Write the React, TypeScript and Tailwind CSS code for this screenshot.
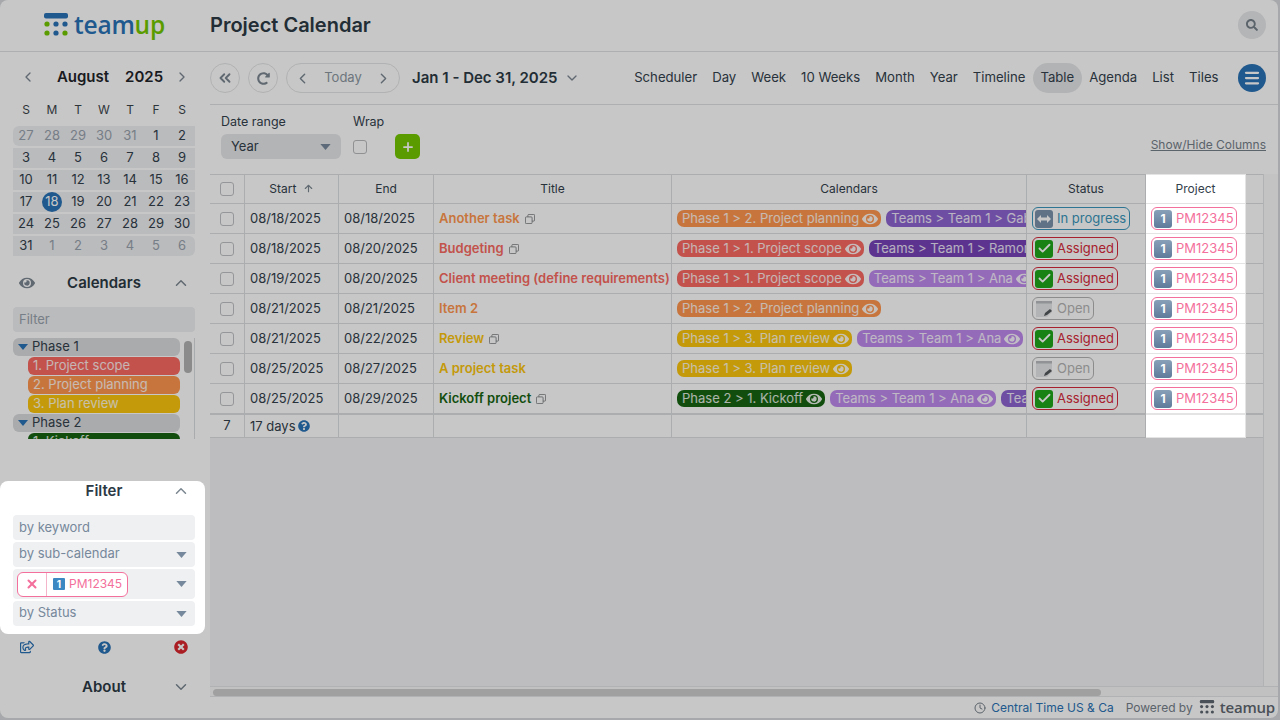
import { ArrowUp, Check, ChevronDown, ChevronLeft, ChevronRight, ChevronsLeft, ChevronUp, Clock, Menu, Plus, X } from "lucide-react";
import { FaEye, FaQuestionCircle, FaRedoAlt, FaRegShareSquare, FaSearch, FaTimesCircle } from "react-icons/fa";

// The whole page sits under a dim layer (z-10). Filter panel and Project column are lifted over it (z-20).

const ORANGE = "bg-[#ff974f]";
const RED = "bg-[#f96961]";
const YELLOW = "bg-[#fbc50d]";
const GREEN = "bg-[#176512]";
const PURPLE = "bg-[#8e65d1]";
const DARK_PURPLE = "bg-[#7643b9]";
const LIGHT_PURPLE = "bg-[#be8aec]";

type Tag = { label: string; color: string };
type Status = "progress" | "assigned" | "open";
type Row = {
  start: string;
  end: string;
  title: string;
  titleColor: string;
  copy: boolean;
  tags: Tag[];
  status: Status;
};

const PLANNING = { label: "Phase 1 > 2. Project planning", color: ORANGE };
const SCOPE = { label: "Phase 1 > 1. Project scope", color: RED };
const REVIEW = { label: "Phase 1 > 3. Plan review", color: YELLOW };
const ANA = { label: "Teams > Team 1 > Ana", color: LIGHT_PURPLE };

const rows: Row[] = [
  { start: "08/18/2025", end: "08/18/2025", title: "Another task", titleColor: "text-[#ff974f]", copy: true, tags: [PLANNING, { label: "Teams > Team 1 > Gabriel", color: PURPLE }], status: "progress" },
  { start: "08/18/2025", end: "08/20/2025", title: "Budgeting", titleColor: "text-[#f96961]", copy: true, tags: [SCOPE, { label: "Teams > Team 1 > Ramon", color: DARK_PURPLE }], status: "assigned" },
  { start: "08/19/2025", end: "08/20/2025", title: "Client meeting (define requirements)", titleColor: "text-[#f96961]", copy: false, tags: [SCOPE, ANA], status: "assigned" },
  { start: "08/21/2025", end: "08/21/2025", title: "Item 2", titleColor: "text-[#ff974f]", copy: false, tags: [PLANNING], status: "open" },
  { start: "08/21/2025", end: "08/22/2025", title: "Review", titleColor: "text-[#fbc50d]", copy: true, tags: [REVIEW, ANA], status: "assigned" },
  { start: "08/25/2025", end: "08/27/2025", title: "A project task", titleColor: "text-[#fbc50d]", copy: false, tags: [REVIEW], status: "open" },
  { start: "08/25/2025", end: "08/29/2025", title: "Kickoff project", titleColor: "text-[#176512]", copy: true, tags: [{ label: "Phase 2 > 1. Kickoff", color: GREEN }, ANA, { label: "Teams > Team 1", color: PURPLE }], status: "assigned" },
];

const weeks = [
  [27, 28, 29, 30, 31, 1, 2],
  [3, 4, 5, 6, 7, 8, 9],
  [10, 11, 12, 13, 14, 15, 16],
  [17, 18, 19, 20, 21, 22, 23],
  [24, 25, 26, 27, 28, 29, 30],
  [31, 1, 2, 3, 4, 5, 6],
];

const views = ["Scheduler", "Day", "Week", "10 Weeks", "Month", "Year", "Timeline", "Table", "Agenda", "List", "Tiles"];

function Caret({ className }: { className: string }) {
  return (
    <svg viewBox="0 0 12 7" className={className} aria-hidden="true">
      <path d="M0 0h12L6 7z" fill="currentColor" />
    </svg>
  );
}

function Logo({ blue, green, textSize, iconSize, gap }: { blue: string; green: string; textSize: string; iconSize: string; gap: string }) {
  return (
    <div className={`flex items-center ${gap}`}>
      <svg viewBox="0 0 24 25" className={iconSize} aria-hidden="true">
        <rect x="0" y="0" width="24" height="5.5" rx="2" className={blue} fill="currentColor" />
        <circle cx="3" cy="11" r="2.6" className={green} fill="currentColor" />
        <circle cx="12" cy="11" r="2.6" className={blue} fill="currentColor" />
        <circle cx="21" cy="11" r="2.6" className={blue} fill="currentColor" />
        <circle cx="3" cy="20" r="2.6" className={green} fill="currentColor" />
        <circle cx="12" cy="20" r="2.6" className={blue} fill="currentColor" />
        <circle cx="21" cy="20" r="2.6" className={green} fill="currentColor" />
      </svg>
      <span className={`font-['Open_Sans',sans-serif] font-semibold leading-none tracking-[-0.2px] ${textSize}`}>
        <span className={blue}>team</span>
        <span className={green}>up</span>
      </span>
    </div>
  );
}

function MiniCalendar() {
  return (
    <div className="pl-[13px] pr-[15px]">
      <div className="mt-[13px] flex h-6 items-center justify-between pl-[7px] pr-[5px] text-[#7c8791]">
        <ChevronLeft size={16} />
        <div className="ml-[10px] flex gap-4 text-[15px] font-semibold text-[#1f2429]">
          <span>August</span>
          <span>2025</span>
        </div>
        <ChevronRight size={16} />
      </div>
      <div className="mt-[11px] grid h-5 grid-cols-7 items-center text-center text-[12px] text-[#3c444b]">
        {["S", "M", "T", "W", "T", "F", "S"].map((d, i) => (
          <span key={i}>{d}</span>
        ))}
      </div>
      <div className="mt-[6px] flex flex-col gap-[2px]">
        {weeks.map((week, w) => (
          <div
            key={w}
            className={`grid h-5 grid-cols-7 items-center bg-[#eff0f2] text-center text-[13px] ${w === 0 ? "rounded-l-[6px]" : ""} ${w === 5 ? "rounded-r-[6px]" : ""}`}
          >
            {week.map((d, i) => {
              const other = (w === 0 && d > 20) || (w === 5 && d < 20);
              if (w === 3 && d === 18) {
                return (
                  <span key={i} className="mx-auto flex size-5 items-center justify-center rounded-full bg-[#2a72b5] text-white">
                    {d}
                  </span>
                );
              }
              return (
                <span key={i} className={other ? "text-[#98a2ad]" : "text-[#33414c]"}>
                  {d}
                </span>
              );
            })}
          </div>
        ))}
      </div>
    </div>
  );
}

function CalendarList() {
  const Group = ({ label }: { label: string }) => (
    <div className="flex h-[18px] items-center gap-[4px] rounded-[6px] bg-[#dadbdd] pl-[5px] text-[13px] text-[#33414c]">
      <Caret className="h-[6px] w-[10px] text-[#2a72b5]" />
      {label}
    </div>
  );
  const Item = ({ label, color }: { label: string; color: string }) => (
    <div className={`ml-[15px] flex h-[18px] shrink-0 items-center overflow-hidden rounded-[6px] pl-[5px] text-[13px] text-white/85 ${color}`}>{label}</div>
  );
  return (
    <div className="relative mt-[6px] h-[101px] overflow-hidden border-r border-[#dadbdd] pr-[14px]">
      <div className="flex flex-col gap-px">
        <Group label="Phase 1" />
        <Item label="1. Project scope" color={RED} />
        <Item label="2. Project planning" color={ORANGE} />
        <Item label="3. Plan review" color={YELLOW} />
        <Group label="Phase 2" />
        <Item label="1. Kickoff" color={GREEN} />
      </div>
      <div className="absolute right-[2px] top-[3px] h-8 w-2 rounded-full bg-[#b3b3b3]" />
    </div>
  );
}

function FilterPanel() {
  const fieldText = "text-[13px] text-[#76889b]";
  return (
    <div className="relative z-20 mt-[42px] h-[153px] w-[205px] rounded-lg bg-white pl-[13px] pr-[10px]">
      <div className="relative flex h-5 items-center justify-center text-[15px] font-semibold text-[#2c3a45]">
        <span>Filter</span>
        <ChevronUp size={18} className="absolute right-[5px] text-[#7c8791]" />
      </div>
      <div className="mt-[14px] flex flex-col gap-[2px]">
        <div className={`flex h-[25px] items-center rounded-[4px] bg-[#eff0f2] pl-[6px] ${fieldText}`}>by keyword</div>
        <div className={`flex h-[25px] items-center justify-between rounded-[4px] bg-[#eff0f2] pl-[6px] pr-[8px] ${fieldText}`}>
          <span className="-mt-[2px]">by sub-calendar</span>
          <Caret className="h-[6px] w-[11px] text-[#76889b]" />
        </div>
        <div className="flex h-[30px] items-center justify-between rounded-[4px] bg-[#eff0f2] pl-1 pr-[8px]">
          <div className="flex h-[25px] w-[111px] items-center rounded-[6px] border border-[#f4709c] bg-white">
            <div className="flex h-full w-[29px] items-center justify-center border-r border-[#f4b4c9]">
              <X size={14} strokeWidth={3.5} className="text-[#f4709c]" />
            </div>
            <span className="ml-[6px] flex size-3 items-center justify-center rounded-[1px] bg-[#3b88c3] text-[10px] font-bold leading-none text-white">1</span>
            <span className="ml-[4px] text-[12px] text-[#f4709c]">PM12345</span>
          </div>
          <Caret className="h-[6px] w-[11px] text-[#76889b]" />
        </div>
        <div className={`flex h-[25px] items-center justify-between rounded-[4px] bg-[#eff0f2] pl-[6px] pr-[8px] ${fieldText}`}>
          <span className="-mt-[2px]">by Status</span>
          <Caret className="h-[6px] w-[11px] text-[#76889b]" />
        </div>
      </div>
    </div>
  );
}

function Sidebar() {
  return (
    <aside className="flex w-[210px] shrink-0 flex-col">
      <MiniCalendar />
      <div className="pl-[13px] pr-[15px]">
        <div className="relative mt-[15px] flex h-6 items-center justify-center text-[15px] font-semibold text-[#2c3a45]">
          <FaEye size={16} className="absolute left-[6px] text-[#7c8791]" />
          <span>Calendars</span>
          <ChevronUp size={18} className="absolute right-[5px] text-[#7c8791]" />
        </div>
        <div className="mt-3 flex h-[25px] items-center rounded-[4px] bg-[#eff0f2] pl-[6px] text-[13px] text-[#98a2ad]">Filter</div>
        <CalendarList />
      </div>
      <FilterPanel />
      <div className="mt-[5px] flex h-4 items-center justify-between pl-[20px] pr-[22px]">
        <FaRegShareSquare size={14} className="text-[#2a72b5]" />
        <FaQuestionCircle size={13} className="text-[#2a72b5]" />
        <FaTimesCircle size={14} className="text-[#d9262e]" />
      </div>
      <div className="relative ml-[13px] mr-[15px] mt-5 flex h-6 items-center justify-center text-[15px] font-semibold text-[#2c3a45]">
        <span>About</span>
        <ChevronDown size={18} className="absolute right-[5px] text-[#7c8791]" />
      </div>
    </aside>
  );
}

function Toolbar() {
  const round = "flex size-[30px] items-center justify-center rounded-full border border-[#e3e4e6] text-[#7c8791]";
  return (
    <div className="flex h-[53px] shrink-0 items-center border-b border-[#dfe0e2]">
      <div className={round}>
        <ChevronsLeft size={18} strokeWidth={2.5} />
      </div>
      <div className={`${round} ml-2`}>
        <FaRedoAlt size={13} />
      </div>
      <div className="ml-2 flex h-[30px] w-[114px] items-center justify-between rounded-full border border-[#e3e4e6] px-[7px] text-[13px] text-[#8c97a1]">
        <ChevronLeft size={17} className="text-[#7c8791]" />
        <span>Today</span>
        <ChevronRight size={17} className="text-[#7c8791]" />
      </div>
      <span className="ml-3 text-[15px] font-semibold text-[#2c3a45]">Jan 1 - Dec 31, 2025</span>
      <ChevronDown size={16} className="ml-[6px] text-[#7c8791]" />
      <div className="ml-auto flex items-center">
        {views.map((v) => (
          <span
            key={v}
            className={`flex h-[30px] items-center rounded-full px-[7.5px] text-[13.15px] text-[#33414c] ${v === "Table" ? "bg-[#e5e6e8]" : ""}`}
          >
            {v}
          </span>
        ))}
        <div className="ml-[12px] mr-3 flex size-7 items-center justify-center rounded-full bg-[#2a72b5] text-white">
          <Menu size={18} strokeWidth={3} />
        </div>
      </div>
    </div>
  );
}

function Options() {
  return (
    <div className="flex h-[69px] shrink-0 items-start pl-[11px] pr-3 pt-[9px] text-[12.5px] text-[#33414c]">
      <div className="flex flex-col">
        <span className="h-5 leading-4">Date range</span>
        <div className="flex h-[25px] w-[120px] items-center justify-between rounded-[6px] bg-[#e6e7e9] px-[10px] text-[13px]">
          Year
          <Caret className="h-[6px] w-[11px] text-[#76889b]" />
        </div>
      </div>
      <div className="ml-3 flex flex-col">
        <span className="h-5 leading-4">Wrap</span>
        <div className="flex h-[25px] items-center">
          <div className="size-[14px] rounded-[3px] border border-[#b8babd] bg-white" />
        </div>
      </div>
      <div className="ml-[11px] mt-5 flex size-[25px] items-center justify-center rounded-[5px] bg-[#74c800] text-white">
        <Plus size={14} strokeWidth={3} />
      </div>
      <span className="ml-auto mt-[22px] text-[12px] text-[#76808a] underline">Show/Hide Columns</span>
    </div>
  );
}

function Keycap() {
  return (
    <span className="flex size-[18px] shrink-0 items-center justify-center rounded-[3px] bg-gradient-to-b from-[#89a0b8] to-[#5f7b9b] text-[12px] font-bold leading-none text-white">1</span>
  );
}

function StatusIcon({ status }: { status: Status }) {
  if (status === "assigned") {
    return (
      <span className="flex size-[18px] shrink-0 items-center justify-center rounded-[3px] bg-[#1fa81a] text-white">
        <Check size={15} strokeWidth={3} />
      </span>
    );
  }
  if (status === "progress") {
    return (
      <svg viewBox="0 0 18 18" className="size-[18px] shrink-0" aria-hidden="true">
        <rect width="18" height="18" rx="3" fill="#7b92ab" />
        <path d="M2 9l4-4v2.5h6V5l4 4-4 4v-2.5H6V13z" fill="#fff" />
      </svg>
    );
  }
  return (
    <svg viewBox="0 0 18 18" className="size-[18px] shrink-0" aria-hidden="true">
      <path d="M1 1h16v11l-5 5H1z" fill="#e6e7e8" />
      <path d="M1 1h16v2.5H1z" fill="#b9bcbf" />
      <path d="M9 16l1-3 5-4 2 2-5 4z" fill="#55595d" />
    </svg>
  );
}

const statusStyles: Record<Status, { label: string; className: string }> = {
  progress: { label: "In progress", className: "border-[#3a96bb] text-[#3a96bb]" },
  assigned: { label: "Assigned", className: "border-[#d72a3b] text-[#d72a3b]" },
  open: { label: "Open", className: "border-[#b4b4b4] text-[#b4b4b4]" },
};

function CopyIcon() {
  return (
    <svg viewBox="0 0 12 12" className="ml-[5px] inline-block size-[10px] align-[-1px] text-[#77797c]" fill="none" stroke="currentColor" aria-hidden="true">
      <rect x="0.5" y="3.5" width="8" height="8" rx="1" />
      <path d="M3.5 3.5v-2a1 1 0 0 1 1-1h6a1 1 0 0 1 1 1v6a1 1 0 0 1-1 1h-2" />
    </svg>
  );
}

function Checkbox() {
  return <div className="mx-auto size-[14px] rounded-[3px] border border-[#bfc1c4] bg-white" />;
}

function EventTable() {
  const th = "border-b border-r border-t border-[#dddee0] text-center text-[12px] font-normal text-[#33414c]";
  const td = "border-b border-r border-[#dddee0] text-[13px] text-[#33414c]";
  const projectTh = "relative z-20 border-b border-r border-t border-[#e4e4e4] bg-white text-center text-[12px] font-normal text-[#33414c]";
  const projectTd = "relative z-20 border-b border-r border-[#e4e4e4] bg-white";
  return (
    <table className="w-[1053px] table-fixed border-separate border-spacing-0 bg-white">
      <colgroup>
        <col className="w-[35px]" />
        <col className="w-[94px]" />
        <col className="w-[95px]" />
        <col className="w-[238px]" />
        <col className="w-[355px]" />
        <col className="w-[119px]" />
        <col className="w-[100px]" />
        <col className="w-[17px]" />
      </colgroup>
      <thead>
        <tr className="h-[30px]">
          <th className={th}><Checkbox /></th>
          <th className={th}>
            Start <ArrowUp size={11} strokeWidth={2.5} className="ml-[3px] inline-block align-[-1px] text-[#7c8791]" />
          </th>
          <th className={th}>End</th>
          <th className={th}>Title</th>
          <th className={th}>Calendars</th>
          <th className={th}>Status</th>
          <th className={projectTh}>Project</th>
          <th className="border-b border-t border-[#dddee0]" />
        </tr>
      </thead>
      <tbody>
        {rows.map((row, i) => (
          <tr key={i} className="h-[30px]">
            <td className={td}><Checkbox /></td>
            <td className={`${td} pl-[5px]`}>{row.start}</td>
            <td className={`${td} pl-[5px]`}>{row.end}</td>
            <td className={`${td} whitespace-nowrap pl-[5px]`}>
              <span className={`font-semibold ${row.titleColor}`}>{row.title}</span>
              {row.copy && <CopyIcon />}
            </td>
            <td className={td}>
              <div className="flex gap-[5px] overflow-hidden whitespace-nowrap pl-[5px]">
                {row.tags.map((tag, t) => (
                  <span key={t} className={`flex h-[17px] shrink-0 items-center gap-[3px] rounded-[7px] pl-[5px] pr-[3px] text-white/85 ${tag.color}`}>
                    {tag.label}
                    <FaEye size={16} className="text-white/90" />
                  </span>
                ))}
              </div>
            </td>
            <td className={`${td} pl-[5px]`}>
              <span className={`flex h-[23px] w-fit items-center gap-[4px] rounded-[6px] border pl-[2px] pr-[3px] ${statusStyles[row.status].className}`}>
                <StatusIcon status={row.status} />
                {statusStyles[row.status].label}
              </span>
            </td>
            <td className={`${projectTd} pl-[5px]`}>
              <span className="flex h-[23px] w-[86px] items-center gap-[4px] rounded-[6px] border border-[#f4709c] pl-[2px] text-[13px] text-[#f4709c]">
                <Keycap />
                PM12345
              </span>
            </td>
            <td className="border-b border-[#dddee0]" />
          </tr>
        ))}
        <tr className="h-6">
          <td className={`${td} border-t text-center`}>7</td>
          <td className={`${td} border-t pl-[5px] pt-px`}>
            17 days
            <FaQuestionCircle size={12} className="ml-[2px] inline-block align-[-1px] text-[#2a72b5]" />
          </td>
          <td className={`${td} border-t`} />
          <td className={`${td} border-t`} />
          <td className={`${td} border-t`} />
          <td className={`${td} border-t`} />
          <td className={`${projectTd} border-t`} />
          <td className="border-b border-t border-[#dddee0]" />
        </tr>
      </tbody>
    </table>
  );
}

export default function App() {
  return (
    <div className="relative h-[720px] w-[1280px] overflow-hidden bg-[#d6d8db] font-['Inter',sans-serif]">
      <div className="flex h-[718px] w-[1278px] flex-col overflow-hidden rounded-lg bg-white">
        <header className="flex h-[52px] shrink-0 items-center border-b border-[#dfe0e2] pb-px">
          <div className="flex w-[210px] pl-[44px]">
            <Logo blue="text-[#2a72b5]" green="text-[#74c800]" textSize="text-[24.5px]" iconSize="h-[25px] w-6" gap="gap-[6px]" />
          </div>
          <h1 className="text-[20px] font-semibold text-[#2c3a45]">Project Calendar</h1>
          <div className="ml-auto mr-3 flex size-7 items-center justify-center rounded-full bg-[#e7e8ea] text-[#76808a]">
            <FaSearch size={12} />
          </div>
        </header>
        <div className="flex min-h-0 flex-1">
          <Sidebar />
          <main className="flex min-w-0 flex-1 flex-col">
            <Toolbar />
            <Options />
            <div className="flex min-h-0 flex-1">
              <div className="flex w-[1053px] flex-col bg-[#f2f3f5]">
                <EventTable />
              </div>
              <div className="flex-1 border-l border-[#e3e4e6] bg-[#fafafa]" />
            </div>
            <div className="flex h-[11px] shrink-0 items-center border-b border-t border-[#e3e4e6] bg-[#f8f8f8] pl-[3px] pt-px">
              <div className="h-[7px] w-[888px] rounded-full bg-[#cdcdcd]" />
            </div>
            <footer className="flex h-[21px] shrink-0 items-center justify-end pr-[3px] text-[12px]">
              <Clock size={12} className="text-[#76808a]" />
              <span className="ml-[5px] text-[#2a72b5]">Central Time US &amp; Ca</span>
              <span className="ml-3 mr-[6px] text-[#76808a]">Powered by</span>
              <Logo blue="text-[#5f6770]" green="text-[#5f6770]" textSize="text-[15px]" iconSize="h-[15px] w-[16px]" gap="gap-[5px]" />
            </footer>
          </main>
        </div>
      </div>
      <div className="absolute inset-0 z-10 bg-black/[0.22]" />
    </div>
  );
}
